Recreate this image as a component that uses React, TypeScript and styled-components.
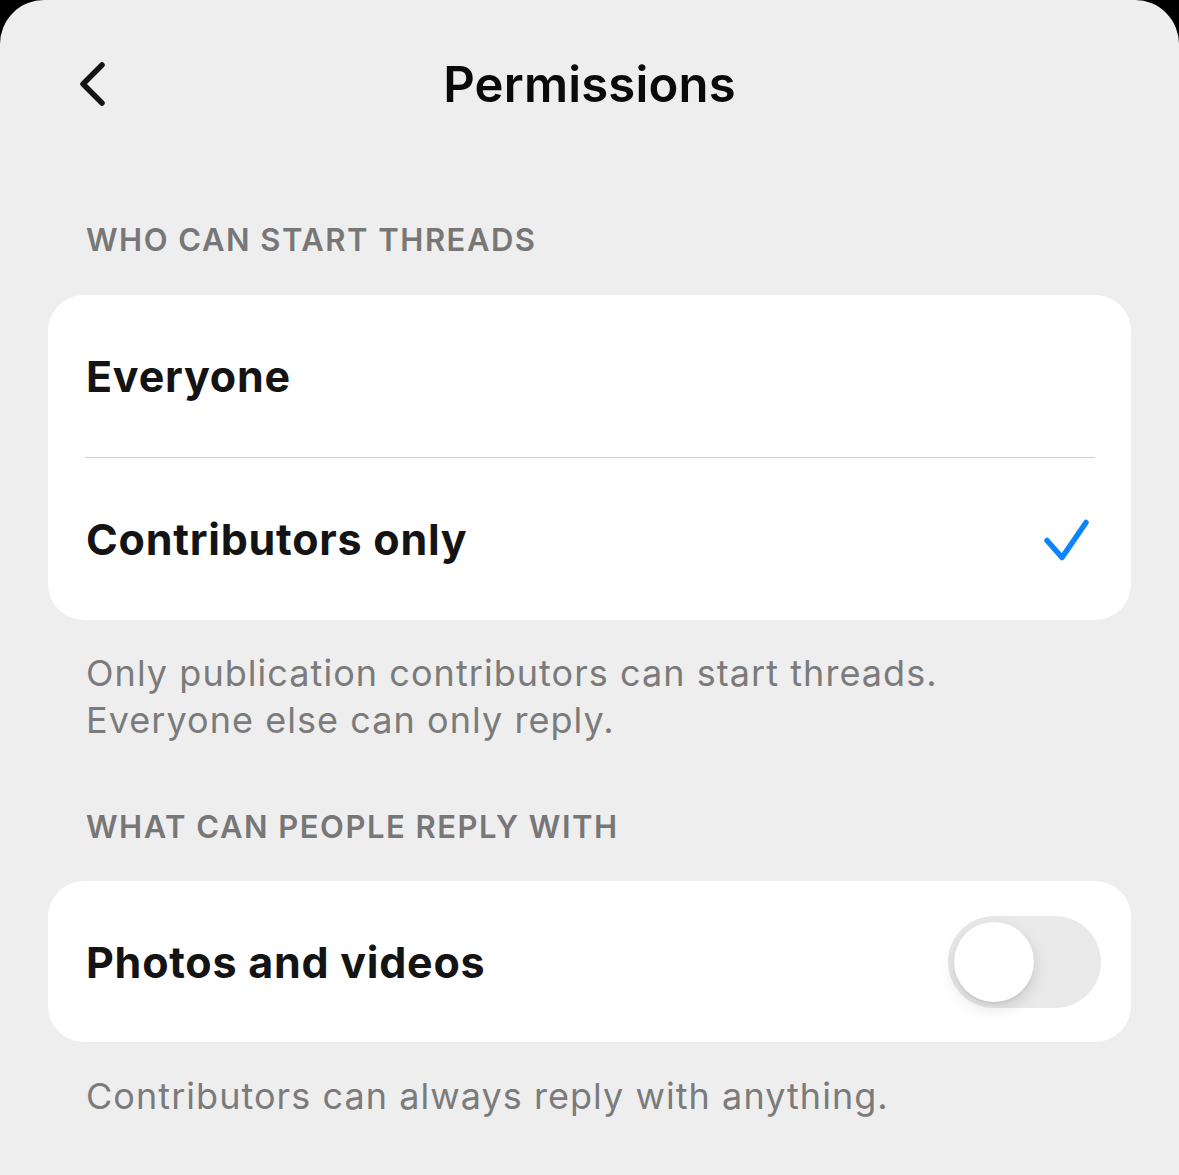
import React, { useState } from 'react';
import styled, { createGlobalStyle } from 'styled-components';

const GlobalStyle = createGlobalStyle`
  html, body {
    margin: 0;
    padding: 0;
    background: #000;
  }
  * {
    box-sizing: border-box;
  }
`;

const Screen = styled.div`
  width: 1179px;
  height: 1175px;
  background: #eeeeee;
  border-radius: 44px 44px 0 0;
  font-family: Inter, 'Noto Sans', sans-serif;
  color: #111111;
  overflow: hidden;
`;

const NavBar = styled.div`
  height: 168px;
  display: grid;
  grid-template-columns: 160px 1fr 160px;
  align-items: center;
`;

const BackButton = styled.button`
  border: none;
  background: none;
  padding: 0 0 0 76px;
  display: flex;
  align-items: center;
  cursor: pointer;
`;

const Title = styled.h1`
  margin: 0;
  text-align: center;
  font-size: 49px;
  font-weight: 600;
  letter-spacing: 0.2px;
  color: #0a0a0a;
`;

const SectionLabel = styled.div<{ $top: number }>`
  margin: ${({ $top }) => $top}px 0 0 86px;
  height: 40px;
  line-height: 40px;
  font-size: 31px;
  font-weight: 600;
  letter-spacing: 1.5px;
  color: #777777;
  text-transform: uppercase;
`;

const Card = styled.div<{ $top: number }>`
  margin: ${({ $top }) => $top}px 48px 0 48px;
  background: #ffffff;
  border-radius: 36px;
  overflow: hidden;
`;

const Row = styled.div<{ $height: number }>`
  height: ${({ $height }) => $height}px;
  display: flex;
  align-items: center;
  justify-content: space-between;
  padding: 0 30px 0 38px;
  cursor: pointer;
`;

const RowLabel = styled.span`
  font-size: 43px;
  font-weight: 700;
  letter-spacing: 0.75px;
  color: #141414;
`;

const Divider = styled.div`
  height: 1px;
  margin: 0 36px 0 37px;
  background: #cfcfcf;
`;

const Footnote = styled.p<{ $top: number }>`
  margin: ${({ $top }) => $top}px 86px 0 86px;
  font-size: 36px;
  line-height: 47px;
  font-weight: 400;
  letter-spacing: 1.05px;
  color: #7b7b7b;
`;

const Track = styled.button<{ $on: boolean }>`
  position: relative;
  width: 153px;
  height: 92px;
  border: none;
  padding: 0;
  border-radius: 46px;
  background: ${({ $on }) => ($on ? '#34c759' : '#e9e9ea')};
  cursor: pointer;
`;

const Knob = styled.span<{ $on: boolean }>`
  position: absolute;
  top: 6px;
  left: ${({ $on }) => ($on ? '67px' : '6px')};
  width: 80px;
  height: 80px;
  border-radius: 50%;
  background: #ffffff;
  box-shadow: 0 6px 16px rgba(0, 0, 0, 0.13), 0 2px 2px rgba(0, 0, 0, 0.05);
`;

const CheckWrap = styled.span`
  display: flex;
  margin-right: 12px;
`;

const ChevronLeft = () => (
  <svg width="30" height="46" viewBox="0 0 30 46" fill="none">
    <path d="M26 4 L7 23 L26 42" stroke="#151515" strokeWidth="5.5" strokeLinecap="round" strokeLinejoin="round" />
  </svg>
);

const Check = () => (
  <svg width="48" height="46" viewBox="0 0 48 46" fill="none">
    <path d="M6 24.5 L21 41.5 L45 6.5" stroke="#0a84ff" strokeWidth="5.5" strokeLinecap="round" strokeLinejoin="round" />
  </svg>
);

const App: React.FC = () => {
  const [choice, setChoice] = useState<'everyone' | 'contributors'>('contributors');
  const [media, setMedia] = useState(false);

  return (
    <>
      <GlobalStyle />
      <Screen>
        <NavBar>
          <BackButton aria-label="Back">
            <ChevronLeft />
          </BackButton>
          <Title>Permissions</Title>
          <div />
        </NavBar>

        <SectionLabel $top={52}>Who can start threads</SectionLabel>
        <Card $top={35}>
          <Row $height={162} onClick={() => setChoice('everyone')}>
            <RowLabel>Everyone</RowLabel>
            {choice === 'everyone' && (
              <CheckWrap>
                <Check />
              </CheckWrap>
            )}
          </Row>
          <Divider />
          <Row $height={162} onClick={() => setChoice('contributors')}>
            <RowLabel>Contributors only</RowLabel>
            {choice === 'contributors' && (
              <CheckWrap>
                <Check />
              </CheckWrap>
            )}
          </Row>
        </Card>
        <Footnote $top={30}>
          Only publication contributors can start threads.
          <br />
          Everyone else can only reply.
        </Footnote>

        <SectionLabel $top={63}>What can people reply with</SectionLabel>
        <Card $top={34}>
          <Row $height={161}>
            <RowLabel>Photos and videos</RowLabel>
            <Track $on={media} onClick={() => setMedia(!media)} aria-label="Photos and videos">
              <Knob $on={media} />
            </Track>
          </Row>
        </Card>
        <Footnote $top={31}>Contributors can always reply with anything.</Footnote>
      </Screen>
    </>
  );
};

export default App;
